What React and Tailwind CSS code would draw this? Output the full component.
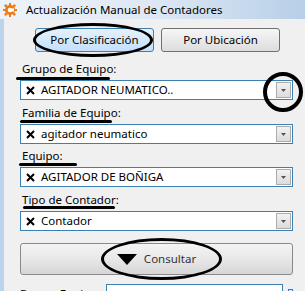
import React from "react";

const font = { fontFamily: '"Segoe UI", "Noto Sans", "Open Sans", sans-serif' };

const Gear = () => (
  <svg width="14" height="14" viewBox="0 0 14 14">
    <g fill="#f07a14">
      <circle cx="7" cy="7" r="5" />
      <rect x="6" y="0" width="2" height="3" />
      <rect x="6" y="11" width="2" height="3" />
      <rect x="0" y="6" width="3" height="2" />
      <rect x="11" y="6" width="3" height="2" />
      <rect x="1.5" y="1.5" width="2.5" height="2.5" transform="rotate(45 2.75 2.75)" />
      <rect x="10" y="1.5" width="2.5" height="2.5" transform="rotate(45 11.25 2.75)" />
      <rect x="1.5" y="10" width="2.5" height="2.5" transform="rotate(45 2.75 11.25)" />
      <rect x="10" y="10" width="2.5" height="2.5" transform="rotate(45 11.25 11.25)" />
    </g>
    <circle cx="7" cy="7" r="2.3" fill="#fff" />
    <rect x="7" y="5.5" width="4" height="3" fill="#fff" />
  </svg>
);

const Combo = ({ value }) => (
  <div className="flex h-[20px] w-[273px] shrink-0 items-center border border-[#3c7fb1] bg-white">
    <svg width="9" height="9" viewBox="0 0 9 9" className="ml-[5px] mr-[6px]">
      <path d="M1 1 L8 8 M8 1 L1 8" stroke="#000" strokeWidth="2" />
    </svg>
    <span className="flex-1 text-[11.5px] leading-none text-black">{value}</span>
    <div className="mr-[1px] flex h-[16px] w-[15px] items-center justify-center border border-[#acacac] bg-gradient-to-b from-[#f2f2f2] to-[#dcdcdc]">
      <svg width="5" height="3" viewBox="0 0 5 3">
        <path d="M0 0 L5 0 L2.5 3 Z" fill="#555" />
      </svg>
    </div>
  </div>
);

const Field = ({ label, value, tall }) => (
  <div className="flex shrink-0 flex-col">
    <div
      className={`${tall ? "h-[24px] pt-[6px]" : "h-[23px] pt-[5px]"} shrink-0 pl-[2px] text-[11.5px] leading-[14px] text-black`}
    >
      {label}
    </div>
    <Combo value={value} />
  </div>
);

export default function App() {
  return (
    <div className="relative h-[291px] w-[305px] overflow-hidden bg-[#f0f0f0]" style={font}>
      {/* title bar */}
      <div className="flex h-[19px] items-center bg-gradient-to-r from-[#eef3fa] via-[#dde8f4] to-[#b8cfe8]">
        <div className="ml-[3px] mr-[9px] flex">
          <Gear />
        </div>
        <span className="text-[11.5px] leading-none text-black">Actualización Manual de Contadores</span>
      </div>

      <div className="flex h-[272px] overflow-hidden">
        <div className="w-[4px] shrink-0 bg-[#bcd3ec]" />
        <div className="flex flex-1 flex-col pl-[16px]">
          {/* tabs */}
          <div className="mt-[9px] flex shrink-0 gap-[7px] pl-[15px]">
            <div className="flex h-[24px] w-[119px] items-center justify-center rounded-[3px] border border-[#3c7fb1] bg-gradient-to-b from-[#e5f1fb] to-[#c4e0fa] text-[11.5px] text-black">
              Por Clasificación
            </div>
            <div className="flex h-[24px] w-[119px] items-center justify-center rounded-[3px] border border-[#707070] bg-gradient-to-b from-[#f6f6f6] to-[#dddddd] text-[11.5px] text-black">
              Por Ubicación
            </div>
          </div>

          <div className="mt-[5px] flex shrink-0 flex-col">
            <Field label="Grupo de Equipo:" value="AGITADOR NEUMATICO.." />
            <Field label="Familia de Equipo:" value="agitador neumatico" tall />
            <Field label="Equipo:" value="AGITADOR DE BOÑIGA" />
            <Field label="Tipo de Contador:" value="Contador" tall />
          </div>

          {/* consultar */}
          <div className="mt-[12px] flex h-[32px] w-[273px] shrink-0 items-center justify-center rounded-[3px] border border-[#8a8a8a] bg-gradient-to-b from-[#f4f4f4] via-[#e8e8e8] to-[#d6d6d6]">
            <svg width="20" height="11" viewBox="0 0 20 11" className="mr-[7px]">
              <path d="M0 0 L20 0 L10 11 Z" fill="#000" />
            </svg>
            <span className="text-[11.5px] text-[#333]">Consultar</span>
          </div>

          {/* bottom row */}
          <div className="mt-[9px] flex shrink-0 items-start">
            <span className="mt-[4px] w-[86px] text-[11.5px] leading-none text-black">Buscar Equipo:</span>
            <div className="h-[20px] w-[177px] border border-[#3c7fb1] bg-white" />
            <div className="ml-[5px] mt-[5px] h-[5px] w-[5px] border border-[#2a7ad5]" />
          </div>
        </div>
      </div>

      {/* annotation marks */}
      <div className="absolute left-[33px] top-[23px] h-[34px] w-[120px] rounded-[50%] border-[3px] border-black" />
      <div className="absolute left-[263px] top-[72px] h-[40px] w-[40px] rounded-full border-[4px] border-black" />
      <div className="absolute left-[101px] top-[238px] h-[42px] w-[121px] rounded-[50%] border-[3px] border-black" />
      <div className="absolute left-[16px] top-[77px] h-[3px] w-[94px] rounded-full bg-black" />
      <div className="absolute left-[20px] top-[120px] h-[3px] w-[92px] rounded-full bg-black" />
      <div className="absolute left-[19px] top-[163px] h-[3px] w-[58px] rounded-full bg-black" />
      <div className="absolute left-[23px] top-[206px] h-[3px] w-[92px] rounded-full bg-black" />
    </div>
  );
}
